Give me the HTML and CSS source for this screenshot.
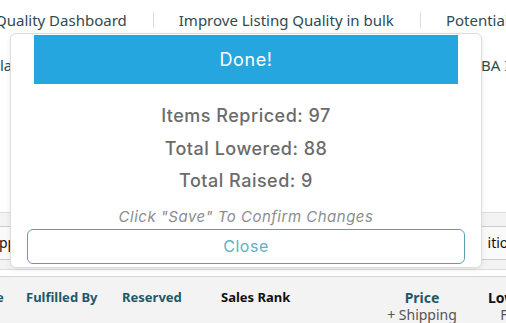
FILE: index.html
```html
<!DOCTYPE html>
<html lang="en">
<head>
    <meta charset="UTF-8">
    <meta name="viewport" content="width=device-width, initial-scale=1.0">
    <title>Repricer</title>
    <link rel="stylesheet" href="styles.css">
</head>
<body>
    <div class="page">
        <!-- tab links across the top -->
        <nav class="tabs">
            <a class="tab">Quality Dashboard</a>
            <a class="tab">Improve Listing Quality in bulk</a>
            <a class="tab">Potential Duplicates</a>
        </nav>
        <div class="subrow">
            <span>la</span>
            <span class="sub-right">FBA Inventory</span>
        </div>

        <div class="toolbar">
            <div class="field">pp</div>
            <div class="field field-right">ition</div>
        </div>

        <!-- table head -->
        <div class="thead">
            <div class="th th-first">e</div>
            <div class="th th-ful">Fulfilled By</div>
            <div class="th th-res">Reserved</div>
            <div class="th th-rank">Sales Rank</div>
            <div class="th th-price">Price<small>+ Shipping</small></div>
            <div class="th th-low">Lowest<small>FBA</small></div>
        </div>
    </div>

    <!-- result dialog -->
    <div class="modal">
        <div class="modal-head">Done!</div>
        <div class="stats">
            <p>Items Repriced: 97</p>
            <p>Total Lowered: 88</p>
            <p>Total Raised: 9</p>
        </div>
        <p class="hint">Click "Save" To Confirm Changes</p>
        <button class="close">Close</button>
    </div>
</body>
</html>
```

FILE: styles.css
```css
body {
    margin: 0;
    font-family: 'Noto Sans', sans-serif;
    background: #fff;
    color: #111;
    overflow: hidden;
}

.page {
    width: 506px;
    height: 323px;
    overflow: hidden;
}

.tabs {
    display: flex;
    align-items: center;
    height: 28px;
    padding-top: 6px;
    margin-left: -5px;
    white-space: nowrap;
}

.tab {
    font-size: 15px;
    color: #2f4a50;
    padding: 0 26px 0 25px;
    border-left: 1px solid #ddd;
    line-height: 16px;
}

.tab:first-child {
    border-left: none;
    padding-left: 0;
}

.subrow {
    display: flex;
    font-size: 15px;
    color: #2f4a50;
    margin-top: 21px;
    line-height: 20px;
    white-space: nowrap;
}

.sub-right {
    margin-left: 461px;
}

.toolbar {
    margin-top: 137px;
    height: 58px;
    background: #f3f3f3;
    border-top: 1px solid #ddd;
    border-bottom: 1px solid #ddd;
    display: flex;
    justify-content: space-between;
    align-items: flex-start;
    padding-top: 13px;
    box-sizing: border-box;
}

.field {
    background: #fafafa;
    border: 1px solid #ccc;
    border-radius: 3px;
    height: 34px;
    line-height: 32px;
    font-size: 14px;
    padding: 0 8px;
    margin-left: -10px;
    box-sizing: border-box;
}

.field-right {
    margin-left: 0;
    margin-right: -20px;
    padding-left: 40px;
}

.thead {
    margin-top: 6px;
    border-top: 1px solid #d5d5d5;
    background: #f3f3f3;
    height: 50px;
    display: flex;
    align-items: flex-start;
    padding-top: 12px;
    font-size: 13px;
    font-weight: bold;
    white-space: nowrap;
}

.th {
    flex-shrink: 0;
    color: #1f5868;
    line-height: 16px;
}

.th small {
    display: block;
    font-weight: normal;
    color: #555;
    font-size: 14px;
}

.th-first { margin-left: -4px; width: 30px; }
.th-ful { width: 96px; }
.th-res { width: 99px; }
.th-rank { color: #111; width: 161px; }
.th-price { width: 80px; text-align: center; font-size: 14px; line-height: 17px; }
.th-low { margin-left: 26px; color: #111; text-align: center; font-size: 14px; line-height: 17px; }

.modal {
    position: absolute;
    left: 10px;
    top: 33px;
    width: 472px;
    height: 235px;
    background: #fff;
    border: 1px solid #ddd;
    border-radius: 6px;
    box-shadow: 0 2px 6px rgba(0, 0, 0, 0.08);
    padding: 1px 16px 0;
    box-sizing: border-box;
    font-family: 'Inter', sans-serif;
    text-align: center;
}

.modal-head {
    background: #25a6df;
    color: #fff;
    font-size: 18px;
    letter-spacing: 0.6px;
    height: 49px;
    line-height: 49px;
    margin: 0 7px;
}

.stats {
    margin-top: 16px;
}

.stats p {
    margin: 0;
    font-size: 18px;
    font-weight: 500;
    letter-spacing: 0.5px;
    color: #6b6b6b;
    line-height: 32.5px;
}

.hint {
    margin: 9px 0 0;
    font-style: italic;
    font-size: 15px;
    letter-spacing: 0.5px;
    color: #8d8d8d;
    line-height: 20px;
}

.close {
    display: block;
    width: 100%;
    height: 35px;
    margin-top: 2px;
    background: #fff;
    border: 1px solid #5c9fb0;
    border-radius: 6px;
    color: #5fb0c8;
    font-family: 'Inter', sans-serif;
    font-size: 16px;
    letter-spacing: 0.5px;
}
```
